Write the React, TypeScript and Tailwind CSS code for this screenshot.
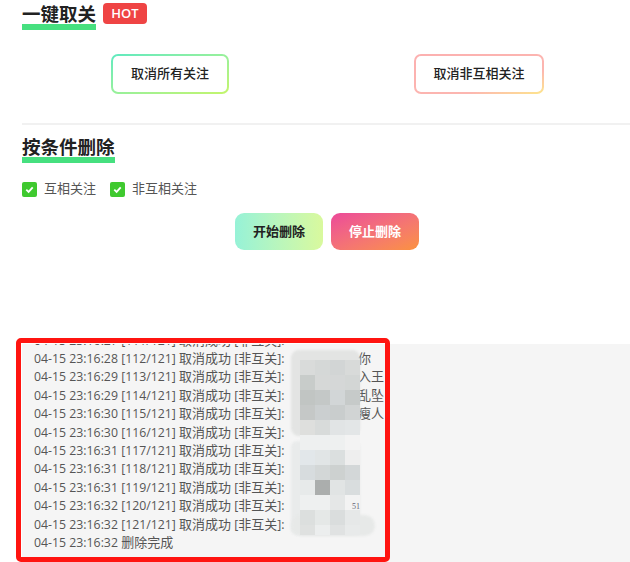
const logs = [
  ['04-15 23:16:27', '111/121', ''],
  ['04-15 23:16:28', '112/121', '你'],
  ['04-15 23:16:29', '113/121', '入王'],
  ['04-15 23:16:29', '114/121', '乱坠'],
  ['04-15 23:16:30', '115/121', '瘦人'],
  ['04-15 23:16:30', '116/121', ''],
  ['04-15 23:16:31', '117/121', ''],
  ['04-15 23:16:31', '118/121', ''],
  ['04-15 23:16:31', '119/121', ''],
  ['04-15 23:16:32', '120/121', ''],
  ['04-15 23:16:32', '121/121', ''],
]

// mosaic over the blurred-out nicknames, 15px cells from y=360
const mosaic = [
  ['#d9dbda', '#d5d8d7', '#d2d5d5', '#d8dad9'],
  ['#c8ccca', '#d6d8d7', '#d5d7d7', '#d3d6d5'],
  ['#c1c5c3', '#c4c8c7', '#d2d6d7', '#c6cac9'],
  ['#c5c8c7', '#cbcfd0', '#c9cdcd', '#d1d4d4'],
  ['#dedfdd', '#d8dbda', '#e1e4e5', '#e3e6e7'],
  ['#eef0f0', '#eef0f0', '#eef0f0', '#f3f3f3'],
  ['#e2e7ea', '#e1e5e6', '#dbdfdf', '#eeeeee'],
  ['#d7dcde', '#d3d7d7', '#cdd1d0', '#d3d7d8'],
  ['#e7eaea', '#abaead', '#e1e4e4', '#d9ddde'],
  ['#eef0f0', '#eef0f0', '#e5e7e7', '#f3f3f3'],
  ['#dcdfde', '#e5e8e7', '#dadddd', '#e6e8e8'],
  ['#dfe1e0', '#eceeee', '#e0e2e2', '#e8eaea'],
]

function TitleBlock({ text }: { text: string }) {
  return (
    <h2 className="relative text-[18.5px] leading-[27px] font-bold text-[#222]">
      <span className="absolute left-0 right-0 bottom-[-3px] h-[6px] bg-[#46e07f]"></span>
      <span className="relative">{text}</span>
    </h2>
  )
}

function Check({ label }: { label: string }) {
  return (
    <label className="flex h-[18px] items-center gap-[7px] text-[13px] text-[#555]">
      <span className="flex w-[15px] h-[15px] items-center justify-center rounded-[2px] bg-[#3fc92f]">
        <svg viewBox="0 0 12 12" className="w-[11px] h-[11px]" fill="none" stroke="#fff" strokeWidth="2">
          <path d="M2.5 6.2 5 8.6 9.5 3.6" />
        </svg>
      </span>
      {label}
    </label>
  )
}

export default function App() {
  return (
    <div
      className="relative w-[630px] h-[562px] overflow-hidden bg-white"
      style={{ fontFamily: '"Open Sans", "Noto Sans CJK SC", sans-serif' }}
    >
      <div className="pl-[22px]">
        <div className="flex items-center gap-[7px] h-[27px]">
          <TitleBlock text="一键取关" />
          <span className="flex h-[21px] w-[44px] items-center justify-center rounded-[4px] bg-[#ef4444] text-[13px] font-semibold text-white">
            HOT
          </span>
        </div>

        <div className="flex h-[98px] items-start pt-[27px] border-b-2 border-[#f1f1f1]">
          <div className="ml-[89px] rounded-[7px] bg-gradient-to-br from-[#5eeac0] to-[#c4f56a] p-[2px]">
            <button className="block h-[36px] w-[114px] rounded-[5px] bg-white text-[13px] font-medium text-[#222]">
              取消所有关注
            </button>
          </div>
          <div className="ml-[185px] rounded-[7px] bg-gradient-to-br from-[#fcb0b0] via-[#fcb6b0] via-70% to-[#fde68a] p-[2px]">
            <button className="block h-[36px] w-[126px] rounded-[5px] bg-white text-[13px] font-medium text-[#222]">
              取消非互相关注
            </button>
          </div>
        </div>

        <div className="mt-[8px] w-fit">
          <TitleBlock text="按条件删除" />
        </div>

        <div className="mt-[20px] flex gap-[14px]">
          <Check label="互相关注" />
          <Check label="非互相关注" />
        </div>

        <div className="mt-[15px] flex justify-center gap-[8px] pl-[2px]">
          <button className="h-[37px] w-[88px] rounded-[9px] bg-gradient-to-r from-[#96f2d7] to-[#d9f99d] text-[13px] font-bold text-[#222]">
            开始删除
          </button>
          <button className="h-[37px] w-[88px] rounded-[9px] bg-gradient-to-br from-[#ec4899] to-[#fb923c] text-[13px] font-bold text-white">
            停止删除
          </button>
        </div>
      </div>

      <div className="ml-[22px] mt-[94px] h-[218px] overflow-hidden bg-[#f5f5f5] pl-[12px] text-[12.3px] leading-[18.4px] text-[#555]">
        <div className="relative mt-[-13.4px]">
          {logs.map(([time, index, tail]) => (
            <div key={index} className="flex h-[18.4px] whitespace-nowrap">
              <span>
                {time} [{index}] <span className="text-[13px]">取消成功</span> [<span className="text-[13px]">非互关</span>]:
              </span>
              <span className="absolute left-[324px] text-[13px]">{tail}</span>
            </div>
          ))}
          <div>
            04-15 23:16:32 <span className="text-[13px]">删除完成</span>
          </div>
        </div>
      </div>

      <div className="absolute left-[291px] top-[350px] h-[86px] w-[69px] rounded-[8px] bg-[#e3e4e3] blur-[1px]"></div>
      <div className="absolute left-[291px] top-[441px] h-[94px] w-[69px] rounded-[6px] bg-[#e9ebeb] blur-[1px]"></div>
      <div className="absolute left-[291px] top-[515px] h-[21px] w-[84px] rounded-full bg-[#e7e9e8] blur-[1px]"></div>

      <div className="absolute left-[300px] top-[360px] grid grid-cols-[repeat(4,15px)] grid-rows-[repeat(11,15px)_10px]">
        {mosaic.flat().map((color, i) => (
          <span key={i} style={{ backgroundColor: color }}></span>
        ))}
      </div>
      <span className="absolute left-[352px] top-[501px] text-[8px] text-[#667] font-['Liberation_Serif',serif]">51</span>

      <div className="absolute left-[16px] top-[338px] h-[224px] w-[374px] rounded-[5px] border-[5px] border-[#ff1410]"></div>
    </div>
  )
}
